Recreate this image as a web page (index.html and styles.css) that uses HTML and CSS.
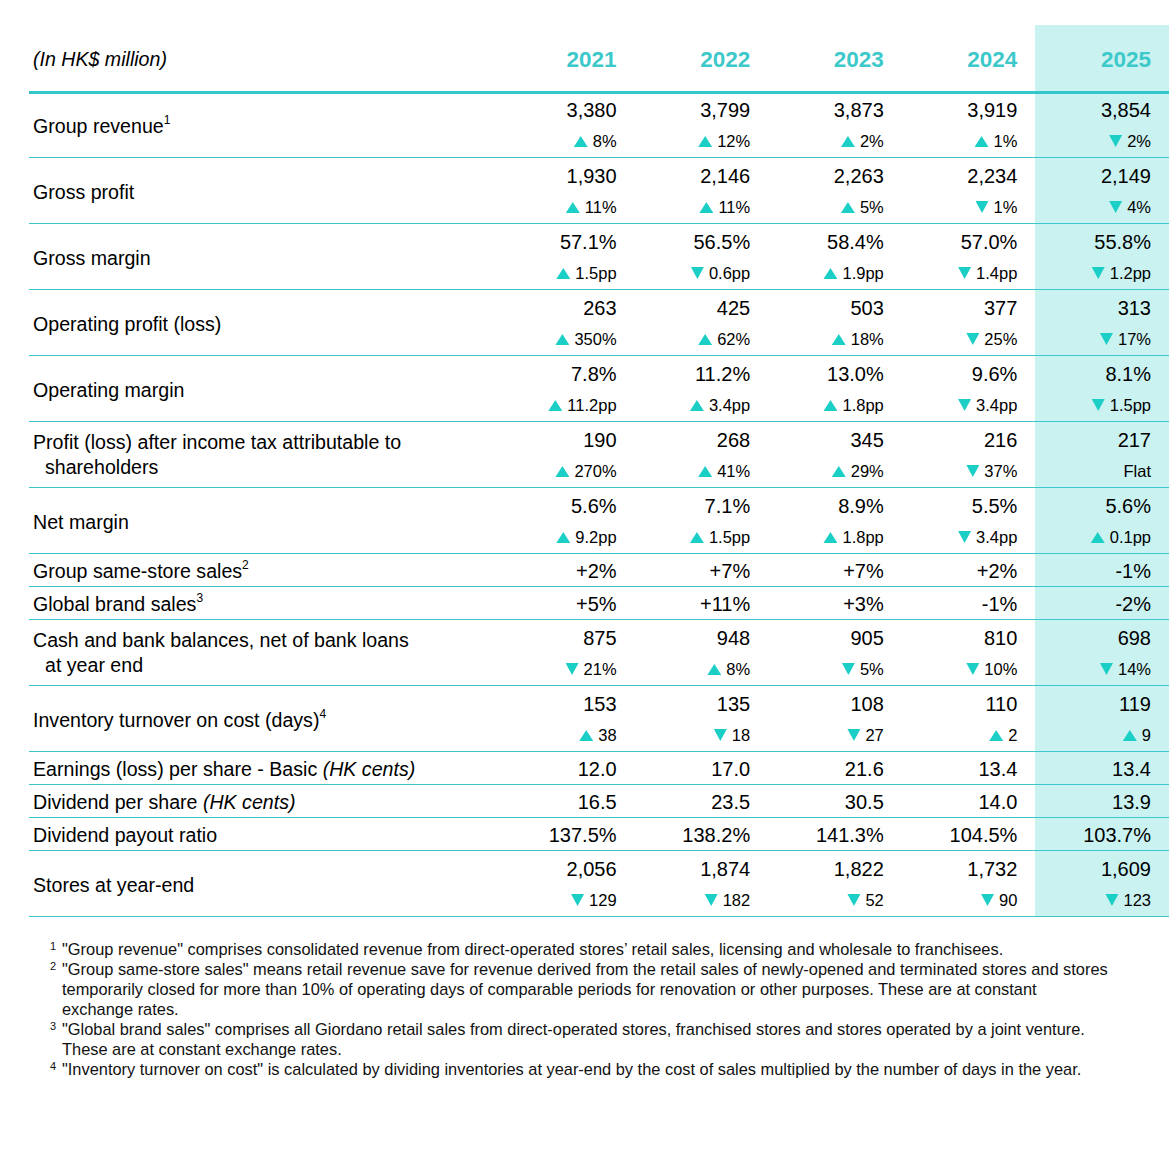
FILE: index.html
```html
<!DOCTYPE html>
<html lang="en">
<head>
<meta charset="utf-8">
<title>Financial Highlights</title>
<link rel="stylesheet" href="styles.css">
</head>
<body>
<div class="page">
  <table class="fin">
    <colgroup>
      <col class="c-label">
      <col class="c-num"><col class="c-num"><col class="c-num"><col class="c-num"><col class="c-num">
    </colgroup>
    <thead>
      <tr>
        <th class="unit">(In HK$ million)</th>
        <th>2021</th><th>2022</th><th>2023</th><th>2024</th><th class="hl">2025</th>
      </tr>
    </thead>
    <tbody>
      <tr class="dbl first">
        <td class="lbl">Group revenue<sup>1</sup></td>
        <td><div class="v">3,380</div><div class="ch"><i class="up"></i>8%</div></td>
        <td><div class="v">3,799</div><div class="ch"><i class="up"></i>12%</div></td>
        <td><div class="v">3,873</div><div class="ch"><i class="up"></i>2%</div></td>
        <td><div class="v">3,919</div><div class="ch"><i class="up"></i>1%</div></td>
        <td class="hl"><div class="v">3,854</div><div class="ch"><i class="dn"></i>2%</div></td>
      </tr>
      <tr class="dbl">
        <td class="lbl">Gross profit</td>
        <td><div class="v">1,930</div><div class="ch"><i class="up"></i>11%</div></td>
        <td><div class="v">2,146</div><div class="ch"><i class="up"></i>11%</div></td>
        <td><div class="v">2,263</div><div class="ch"><i class="up"></i>5%</div></td>
        <td><div class="v">2,234</div><div class="ch"><i class="dn"></i>1%</div></td>
        <td class="hl"><div class="v">2,149</div><div class="ch"><i class="dn"></i>4%</div></td>
      </tr>
      <tr class="dbl">
        <td class="lbl">Gross margin</td>
        <td><div class="v">57.1%</div><div class="ch"><i class="up"></i>1.5pp</div></td>
        <td><div class="v">56.5%</div><div class="ch"><i class="dn"></i>0.6pp</div></td>
        <td><div class="v">58.4%</div><div class="ch"><i class="up"></i>1.9pp</div></td>
        <td><div class="v">57.0%</div><div class="ch"><i class="dn"></i>1.4pp</div></td>
        <td class="hl"><div class="v">55.8%</div><div class="ch"><i class="dn"></i>1.2pp</div></td>
      </tr>
      <tr class="dbl">
        <td class="lbl">Operating profit (loss)</td>
        <td><div class="v">263</div><div class="ch"><i class="up"></i>350%</div></td>
        <td><div class="v">425</div><div class="ch"><i class="up"></i>62%</div></td>
        <td><div class="v">503</div><div class="ch"><i class="up"></i>18%</div></td>
        <td><div class="v">377</div><div class="ch"><i class="dn"></i>25%</div></td>
        <td class="hl"><div class="v">313</div><div class="ch"><i class="dn"></i>17%</div></td>
      </tr>
      <tr class="dbl">
        <td class="lbl">Operating margin</td>
        <td><div class="v">7.8%</div><div class="ch"><i class="up"></i>11.2pp</div></td>
        <td><div class="v">11.2%</div><div class="ch"><i class="up"></i>3.4pp</div></td>
        <td><div class="v">13.0%</div><div class="ch"><i class="up"></i>1.8pp</div></td>
        <td><div class="v">9.6%</div><div class="ch"><i class="dn"></i>3.4pp</div></td>
        <td class="hl"><div class="v">8.1%</div><div class="ch"><i class="dn"></i>1.5pp</div></td>
      </tr>
      <tr class="dbl">
        <td class="lbl two">Profit (loss) after income tax attributable to<span class="cont">shareholders</span></td>
        <td><div class="v">190</div><div class="ch"><i class="up"></i>270%</div></td>
        <td><div class="v">268</div><div class="ch"><i class="up"></i>41%</div></td>
        <td><div class="v">345</div><div class="ch"><i class="up"></i>29%</div></td>
        <td><div class="v">216</div><div class="ch"><i class="dn"></i>37%</div></td>
        <td class="hl"><div class="v">217</div><div class="ch">Flat</div></td>
      </tr>
      <tr class="dbl">
        <td class="lbl">Net margin</td>
        <td><div class="v">5.6%</div><div class="ch"><i class="up"></i>9.2pp</div></td>
        <td><div class="v">7.1%</div><div class="ch"><i class="up"></i>1.5pp</div></td>
        <td><div class="v">8.9%</div><div class="ch"><i class="up"></i>1.8pp</div></td>
        <td><div class="v">5.5%</div><div class="ch"><i class="dn"></i>3.4pp</div></td>
        <td class="hl"><div class="v">5.6%</div><div class="ch"><i class="up"></i>0.1pp</div></td>
      </tr>
      <tr class="sgl">
        <td class="lbl">Group same-store sales<sup>2</sup></td>
        <td><div class="v">+2%</div></td>
        <td><div class="v">+7%</div></td>
        <td><div class="v">+7%</div></td>
        <td><div class="v">+2%</div></td>
        <td class="hl"><div class="v">-1%</div></td>
      </tr>
      <tr class="sgl">
        <td class="lbl">Global brand sales<sup>3</sup></td>
        <td><div class="v">+5%</div></td>
        <td><div class="v">+11%</div></td>
        <td><div class="v">+3%</div></td>
        <td><div class="v">-1%</div></td>
        <td class="hl"><div class="v">-2%</div></td>
      </tr>
      <tr class="dbl">
        <td class="lbl two">Cash and bank balances, net of bank loans<span class="cont">at year end</span></td>
        <td><div class="v">875</div><div class="ch"><i class="dn"></i>21%</div></td>
        <td><div class="v">948</div><div class="ch"><i class="up"></i>8%</div></td>
        <td><div class="v">905</div><div class="ch"><i class="dn"></i>5%</div></td>
        <td><div class="v">810</div><div class="ch"><i class="dn"></i>10%</div></td>
        <td class="hl"><div class="v">698</div><div class="ch"><i class="dn"></i>14%</div></td>
      </tr>
      <tr class="dbl">
        <td class="lbl">Inventory turnover on cost (days)<sup>4</sup></td>
        <td><div class="v">153</div><div class="ch"><i class="up"></i>38</div></td>
        <td><div class="v">135</div><div class="ch"><i class="dn"></i>18</div></td>
        <td><div class="v">108</div><div class="ch"><i class="dn"></i>27</div></td>
        <td><div class="v">110</div><div class="ch"><i class="up"></i>2</div></td>
        <td class="hl"><div class="v">119</div><div class="ch"><i class="up"></i>9</div></td>
      </tr>
      <tr class="sgl">
        <td class="lbl">Earnings (loss) per share - Basic <em>(HK cents)</em></td>
        <td><div class="v">12.0</div></td>
        <td><div class="v">17.0</div></td>
        <td><div class="v">21.6</div></td>
        <td><div class="v">13.4</div></td>
        <td class="hl"><div class="v">13.4</div></td>
      </tr>
      <tr class="sgl">
        <td class="lbl">Dividend per share <em>(HK cents)</em></td>
        <td><div class="v">16.5</div></td>
        <td><div class="v">23.5</div></td>
        <td><div class="v">30.5</div></td>
        <td><div class="v">14.0</div></td>
        <td class="hl"><div class="v">13.9</div></td>
      </tr>
      <tr class="sgl">
        <td class="lbl">Dividend payout ratio</td>
        <td><div class="v">137.5%</div></td>
        <td><div class="v">138.2%</div></td>
        <td><div class="v">141.3%</div></td>
        <td><div class="v">104.5%</div></td>
        <td class="hl"><div class="v">103.7%</div></td>
      </tr>
      <tr class="dbl">
        <td class="lbl">Stores at year-end</td>
        <td><div class="v">2,056</div><div class="ch"><i class="dn"></i>129</div></td>
        <td><div class="v">1,874</div><div class="ch"><i class="dn"></i>182</div></td>
        <td><div class="v">1,822</div><div class="ch"><i class="dn"></i>52</div></td>
        <td><div class="v">1,732</div><div class="ch"><i class="dn"></i>90</div></td>
        <td class="hl"><div class="v">1,609</div><div class="ch"><i class="dn"></i>123</div></td>
      </tr>
    </tbody>
  </table>

  <div class="notes">
    <div class="note"><span class="num">1</span><p>"Group revenue" comprises consolidated revenue from direct-operated stores’ retail sales, licensing and wholesale to franchisees.</p></div>
    <div class="note"><span class="num">2</span><p>"Group same-store sales" means retail revenue save for revenue derived from the retail sales of newly-opened and terminated stores and stores temporarily closed for more than 10% of operating days of comparable periods for renovation or other purposes. These are at constant exchange rates.</p></div>
    <div class="note"><span class="num">3</span><p>"Global brand sales" comprises all Giordano retail sales from direct-operated stores, franchised stores and stores operated by a joint venture. These are at constant exchange rates.</p></div>
    <div class="note"><span class="num">4</span><p>"Inventory turnover on cost" is calculated by dividing inventories at year-end by the cost of sales multiplied by the number of days in the year.</p></div>
  </div>
</div>
</body>
</html>
```

FILE: styles.css
```css
* { box-sizing: border-box; }

html, body {
  margin: 0;
  padding: 0;
  background: #ffffff;
}

body {
  font-family: "Liberation Sans", Arial, sans-serif;
  color: #000000;
}

.page {
  padding: 25px 0 0 29px;
}

.fin {
  width: 1140px;
  table-layout: fixed;
  border-collapse: separate;
  border-spacing: 0;
}

.c-label { width: 472px; }
.c-num { width: 133.6px; }

.fin th,
.fin td {
  padding: 0 18px 0 0;
  text-align: right;
}

.fin thead th {
  height: 69px;
  padding-top: 22px;
  vertical-align: top;
  font-size: 22.5px;
  line-height: 26px;
  font-weight: bold;
  color: #3dc8ca;
  border-bottom: 3px solid #34c7c9;
}

.fin thead th.unit {
  text-align: left;
  padding: 21px 0 0 4px;
  font-weight: normal;
  font-style: italic;
  color: #000000;
  font-size: 19.6px;
  line-height: 26px;
}

.fin td {
  border-bottom: 1px solid #3cc6cb;
  vertical-align: top;
}

.fin td.lbl {
  text-align: left;
  padding: 3px 0 0 4px;
  font-size: 19.6px;
  line-height: 25px;
  vertical-align: middle;
}

.fin td.lbl.two { padding-top: 1px; }

.lbl .cont {
  display: block;
  padding-left: 12px;
}

.lbl sup {
  font-size: 12px;
  line-height: 0;
  vertical-align: 9px;
}

.lbl em { font-style: italic; }

.hl { background: #c9f2f1; }

.v {
  font-size: 20px;
  line-height: 30px;
  padding-top: 3px;
  height: 33px;
}

.first .v {
  padding-top: 1px;
  height: 31px;
}

.first td.lbl { padding-top: 1px; }

.ch {
  font-size: 16.5px;
  line-height: 32px;
  height: 32px;
}

.sgl .v {
  height: 32px;
  padding-top: 3px;
  line-height: 28px;
}

.sgl td.lbl {
  padding-top: 2px;
  height: 33px;
}

.up, .dn {
  display: inline-block;
  width: 14px;
  height: 11px;
  margin-right: 5px;
  background: #1ccfc6;
  vertical-align: baseline;
}

.up { clip-path: polygon(50% 0, 100% 100%, 0 100%); }
.dn { clip-path: polygon(0 0, 100% 0, 50% 100%); width: 13px; height: 12px; }

.notes {
  margin-top: 22px;
  padding-left: 21px;
  width: 1082px;
  font-size: 16.4px;
  line-height: 20px;
  color: #111111;
}

.note {
  display: flex;
  align-items: flex-start;
}

.note .num {
  flex: 0 0 12px;
  font-size: 11px;
  line-height: 14px;
}

.note p {
  margin: 0;
  flex: 1 1 auto;
}
```
